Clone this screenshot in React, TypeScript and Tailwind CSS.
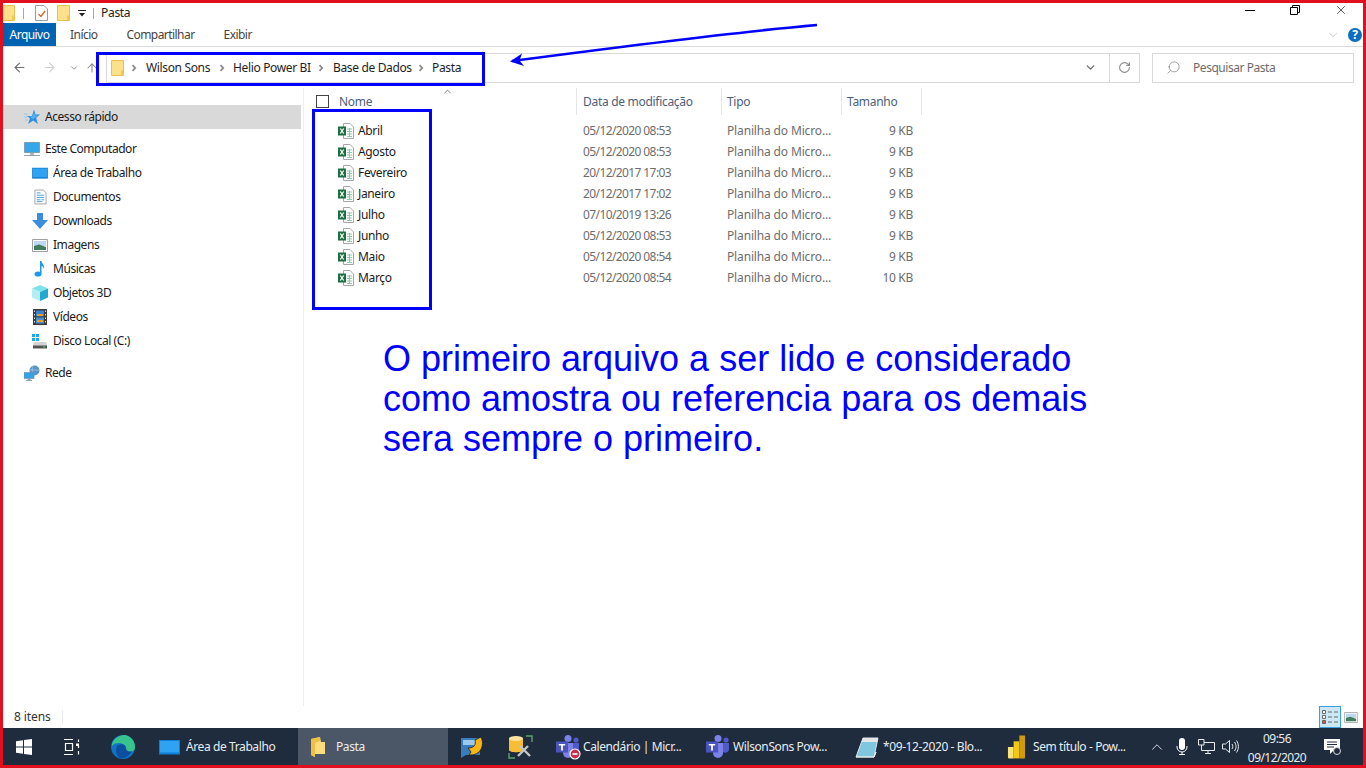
import { ReactNode } from "react";
import { ArrowLeft, ArrowRight, ArrowUp, ChevronDown, ChevronUp, RotateCw, Search, X } from "lucide-react";

const FONT = "font-['Noto_Sans',sans-serif]";

const files = [
  ["Abril", "05/12/2020 08:53", "9 KB"],
  ["Agosto", "05/12/2020 08:53", "9 KB"],
  ["Fevereiro", "20/12/2017 17:03", "9 KB"],
  ["Janeiro", "20/12/2017 17:02", "9 KB"],
  ["Julho", "07/10/2019 13:26", "9 KB"],
  ["Junho", "05/12/2020 08:53", "9 KB"],
  ["Maio", "05/12/2020 08:54", "9 KB"],
  ["Março", "05/12/2020 08:54", "10 KB"],
];

const Folder = ({ className = "w-[13px] h-[16px]" }: { className?: string }) => (
  <svg viewBox="0 0 13 16" className={className}>
    <path d="M0.5 0.5H12.5V15.5H0.5Z" fill="#fde08a" stroke="#e8c04f" />
    <path d="M10 10.5H12.5V15.5H10Z" fill="#f2c94c" />
  </svg>
);

const ExcelIcon = () => (
  <svg viewBox="0 0 16 16" className="w-4 h-4 shrink-0">
    <path d="M5.5 0.5H12L15.5 4V15.5H5.5Z" fill="#fff" stroke="#a6a6a6" />
    <path d="M9 6H14M9 8.5H14M9 11H14M9 13.5H14M11.5 5V14" stroke="#8fc7a6" strokeWidth="1" />
    <path d="M0 3.5H8V12.5H0Z" fill="#1d6f42" />
    <path d="M2.3 5.5L5.7 10.5M5.7 5.5L2.3 10.5" stroke="#fff" strokeWidth="1.3" />
  </svg>
);

const Crumb = () => (
  <svg viewBox="0 0 6 8" className="w-[6px] h-2 shrink-0 block">
    <path d="M1.5 1.2L4.2 4L1.5 6.8" fill="none" stroke="#8a8a8a" strokeWidth="1.8" />
  </svg>
);

const StarIcon = () => (
  <svg viewBox="0 0 16 16" className="w-4 h-4">
    <path d="M10 0.5L11.5 5.5H16L12.2 8.8L13.8 15L9.2 11.5L4 15L6 9.5L3 7H8Z" fill="#2f8fdf" />
    <path d="M10 3L11 6.5H14L9 10L5.5 7.5H8.5Z" fill="#53b4f2" />
    <path d="M0 5H4M0 8H3M1 11H4" stroke="#8fc8f0" strokeWidth="1" />
  </svg>
);
const PcIcon = () => (
  <svg viewBox="0 0 16 16" className="w-4 h-4">
    <path d="M0.5 1.5H15.5V11.5H0.5Z" fill="#35a7e8" stroke="#7d9db3" />
    <path d="M6 12H10V14H6Z" fill="#a9b8c4" />
    <path d="M0 14.5H16" stroke="#8fa3b3" />
  </svg>
);
const DesktopIcon = ({ className = "w-4 h-4" }: { className?: string }) => (
  <svg viewBox="0 0 21 16" className={className}>
    <path d="M0 1H21V15.5H0Z" fill="#0e7fd6" />
    <path d="M1 2H20V13.5H1Z" fill="#2fa3f3" />
  </svg>
);
const DocIcon = () => (
  <svg viewBox="0 0 14 16" className="w-[13px] h-4">
    <path d="M1 0.5H10L13 3.5V15.5H1Z" fill="#fff" stroke="#a0a0a0" />
    <path d="M3 3.5H7M3 6H11M3 8.5H11M3 11H7M8 11H11M3 13H9" stroke="#3b9ade" strokeWidth="1" />
  </svg>
);
const DownIcon = () => (
  <svg viewBox="0 0 16 16" className="w-4 h-4">
    <path d="M5 0H11V7H16L8 16L0 7H5Z" fill="#3b8edb" />
  </svg>
);
const PictureIcon = ({ className = "w-4 h-[13px]" }: { className?: string }) => (
  <svg viewBox="0 0 16 13" className={className}>
    <path d="M0.5 0.5H15.5V12.5H0.5Z" fill="#fff" stroke="#a0a0a0" />
    <path d="M2 2H14V7H2Z" fill="#bcd9ef" />
    <path d="M2 7L7 5.5L14 8V11H2Z" fill="#3f7d5c" />
  </svg>
);
const MusicIcon = () => (
  <svg viewBox="0 0 12 16" className="w-3 h-4">
    <ellipse cx="4" cy="13" rx="3.5" ry="2.6" fill="#1e9be8" />
    <path d="M6 13V0H7.5C8 3 11 4 10 8C9.5 6 8.5 5 7.5 5V13Z" fill="#1e9be8" />
  </svg>
);
const CubeIcon = () => (
  <svg viewBox="0 0 16 16" className="w-4 h-4">
    <path d="M8 0L16 3.5L8 7L0 3.5Z" fill="#7fe3ea" />
    <path d="M0 3.5L8 7V16L0 12.5Z" fill="#b5eef2" />
    <path d="M16 3.5L8 7V16L16 12.5Z" fill="#22a9cf" />
  </svg>
);
const FilmIcon = () => (
  <svg viewBox="0 0 14 16" className="w-[14px] h-4">
    <path d="M0 0H14V16H0Z" fill="#3b3b3b" />
    <path d="M1 1.5H2V3H1ZM1 5H2V6.5H1ZM1 8.5H2V10H1ZM1 12H2V13.5H1ZM12 1.5H13V3H12ZM12 5H13V6.5H12ZM12 8.5H13V10H12ZM12 12H13V13.5H12Z" fill="#d8d8d8" />
    <path d="M3 1.5H11V7.5H3Z" fill="#3f7fcf" />
    <path d="M3 8.5H11V14.5H3Z" fill="#4f8fd0" />
    <path d="M4 5H10V7H4ZM4 11H10V13H4Z" fill="#e0a030" />
  </svg>
);
const DiskIcon = () => (
  <svg viewBox="0 0 16 16" className="w-4 h-4">
    <path d="M0 1H3V4H0ZM4 1H7V4H4ZM0 5H3V8H0ZM4 5H7V8H4Z" fill="#1fa5ef" />
    <path d="M2 9H14L15 11V15H1V11Z" fill="#d4d4d4" />
    <path d="M1 12.5H15V15.5H1Z" fill="#555" />
    <path d="M11 13.5H13V14.5H11Z" fill="#3fdc6a" />
  </svg>
);
const NetIcon = () => (
  <svg viewBox="0 0 16 16" className="w-4 h-4">
    <circle cx="10.5" cy="5.5" r="5" fill="#5a93c8" />
    <path d="M9 1C8 3 8 5 9 7M5.5 5H15.5" stroke="#a9cbe6" strokeWidth="0.7" fill="none" />
    <path d="M0 7.5H10V13.5H0Z" fill="#34a3e6" stroke="#6f8da3" strokeWidth="0.6" />
    <path d="M3.5 14H6.5V15H8V16H2V15H3.5Z" fill="#8fa3b3" />
  </svg>
);

const NavRow = ({ icon, label, indent, selected }: { icon: ReactNode; label: string; indent?: boolean; selected?: boolean }) => (
  <div className={`h-6 flex items-center shrink-0 mr-[2px] ${selected ? "bg-[#d9d9d9]" : ""} ${indent ? "pl-[29px]" : "pl-[21px]"}`}>
    <span className="flex items-center justify-center shrink-0 w-[16px] mr-[5px]">{icon}</span>
    <span className="text-[12px] text-[#1a1a1a] whitespace-nowrap tracking-[-0.45px]">{label}</span>
  </div>
);

const TeamsIcon = ({ busy }: { busy?: boolean }) => (
  <svg viewBox="0 0 26 26" className="w-[26px] h-[26px] shrink-0">
    <circle cx="13" cy="4.5" r="3.5" fill="#7b83eb" />
    <circle cx="21" cy="6" r="2.6" fill="#5059c9" />
    <path d="M8 9H18V19A5 5 0 0 1 8 19Z" fill="#7b83eb" />
    <path d="M18 9H24V16A4 4 0 0 1 18 18Z" fill="#5059c9" />
    <path d="M1 7.5H13V18.5H1Z" fill="#4b53bc" />
    <path d="M3.8 10H10.2V11.6H7.9V16.5H6.1V11.6H3.8Z" fill="#fff" />
    {busy && <circle cx="20" cy="20" r="5" fill="#c4314b" stroke="#fff" strokeWidth="1.2" />}
    {busy && <path d="M17.5 20H22.5" stroke="#fff" strokeWidth="1.6" />}
  </svg>
);

const TaskItem = ({ width, icon, label, active }: { width: string; icon: ReactNode; label?: string; active?: boolean }) => (
  <div className={`h-full flex items-center shrink-0 ${width} ${active ? "bg-[#4b5766]" : ""}`}>
    {icon}
    {label && <span className="text-[12px] text-[#e8ecf0] whitespace-nowrap tracking-[-0.4px] pt-px">{label}</span>}
  </div>
);

export default function App() {
  return (
    <div className={`${FONT} relative w-screen h-screen overflow-hidden border-[3px] border-[#e2101f] bg-white flex flex-col`}>
      {/* Title bar */}
      <div className="h-5 shrink-0 flex items-center relative">
        <div className="w-3 h-4 overflow-hidden flex justify-end"><Folder className="w-[13px] h-4 shrink-0" /></div>
        <div className="ml-2 w-px h-[11px] bg-[#a8a8a8]" />
        <svg viewBox="0 0 13 16" className="ml-[11px] w-[13px] h-4">
          <path d="M0.5 0.5H9L12.5 4V15.5H0.5Z" fill="#fff" stroke="#9c9c9c" />
          <path d="M3.5 9L6 11.5L10 6" fill="none" stroke="#e2622a" strokeWidth="1.4" />
        </svg>
        <Folder className="ml-[9px] w-[13px] h-4" />
        <svg viewBox="0 0 8 8" className="ml-[8px] w-2 h-2">
          <path d="M0 1H8V2H0ZM1 4H7L4 7.5Z" fill="#222" />
        </svg>
        <div className="ml-[7px] w-px h-[11px] bg-[#a8a8a8]" />
        <span className="ml-[7px] text-[12px] text-[#222] tracking-[-0.3px] pb-px">Pasta</span>
        <div className="ml-auto flex items-center h-full pb-[6px]">
          <div className="w-[10px] h-px bg-black mr-[35px]" />
          <svg viewBox="0 0 10 10" className="w-[10px] h-[10px] mr-[34px]">
            <path d="M2.5 2.5V0.5H9.5V7.5H7.5M0.5 2.5H7.5V9.5H0.5Z" fill="none" stroke="#000" />
          </svg>
          <X size={14} strokeWidth={1.1} className="text-black mr-[15px]" />
        </div>
      </div>

      {/* Ribbon tabs */}
      <div className="h-6 shrink-0 flex border-b border-[#dadbdc] text-[12px] text-[#444] tracking-[-0.55px]">
        <div className="w-[53px] h-[23px] bg-[#0063b1] text-white flex items-center justify-center">Arquivo</div>
        <span className="ml-[14px] leading-[23px]">Início</span>
        <span className="ml-[29px] leading-[23px]">Compartilhar</span>
        <span className="ml-[29px] leading-[23px]">Exibir</span>
        <div className="ml-auto flex items-center pr-px">
          <ChevronDown size={14} strokeWidth={1.2} className="text-[#b5b5b5] mr-[8px]" />
          <span className="w-[14px] h-[14px] rounded-full bg-[#0a6fc4] text-white text-[12px] font-bold flex items-center justify-center tracking-normal">?</span>
        </div>
      </div>

      {/* Address row */}
      <div className="h-[41px] shrink-0 flex items-center">
        <ArrowLeft size={15} strokeWidth={1.7} className="ml-[9px] text-[#6e6e6e]" />
        <ArrowRight size={15} strokeWidth={1.7} className="ml-[15px] text-[#d0d0d0]" />
        <ChevronDown size={10} strokeWidth={2.4} className="ml-[12px] text-[#9a9a9a]" />
        <ArrowUp size={14} strokeWidth={1.8} className="ml-[6px] text-[#8a8a8a]" />
        <div className="ml-[7px] w-[1034px] h-[30px] border border-[#d9d9d9] flex items-center text-[12px] text-[#1e1e1e] tracking-[-0.35px]">
          <Folder className="ml-[4px] w-[13px] h-4 shrink-0" />
          <span className="ml-[7px]"><Crumb /></span>
          <span className="ml-[9px] w-[64px] whitespace-nowrap">Wilson Sons</span>
          <span className="ml-[9px]"><Crumb /></span>
          <span className="ml-[8px] w-[78px] whitespace-nowrap">Helio Power BI</span>
          <span className="ml-[7px]"><Crumb /></span>
          <span className="ml-[9px] w-[77px] whitespace-nowrap">Base de Dados</span>
          <span className="ml-[8px]"><Crumb /></span>
          <span className="ml-[8px] whitespace-nowrap">Pasta</span>
          <ChevronDown size={13} strokeWidth={2.4} className="ml-auto mr-[12px] text-[#6b6b6b]" />
          <div className="w-[30px] h-full border-l border-[#d9d9d9] flex items-center justify-center">
            <RotateCw size={13} strokeWidth={2} className="text-[#8a8a8a]" />
          </div>
        </div>
        <div className="ml-[12px] w-[202px] h-[30px] border border-[#d9d9d9] flex items-center text-[12px] text-[#6d6d6d] tracking-[-0.45px]">
          <Search size={15} strokeWidth={1} className="ml-[13px] mr-[12px] text-[#6d6d6d] -scale-x-100" />
          Pesquisar Pasta
        </div>
      </div>

      {/* Main area */}
      <div className="flex-1 min-h-0 flex">
        <div className="w-[301px] shrink-0 border-r border-[#eeeeee] flex flex-col pt-[17px]">
          <NavRow icon={<StarIcon />} label="Acesso rápido" selected />
          <div className="h-2 shrink-0" />
          <NavRow icon={<PcIcon />} label="Este Computador" />
          <NavRow indent icon={<DesktopIcon className="w-4 h-3" />} label="Área de Trabalho" />
          <NavRow indent icon={<DocIcon />} label="Documentos" />
          <NavRow indent icon={<DownIcon />} label="Downloads" />
          <NavRow indent icon={<PictureIcon />} label="Imagens" />
          <NavRow indent icon={<MusicIcon />} label="Músicas" />
          <NavRow indent icon={<CubeIcon />} label="Objetos 3D" />
          <NavRow indent icon={<FilmIcon />} label="Vídeos" />
          <NavRow indent icon={<DiskIcon />} label="Disco Local (C:)" />
          <div className="h-2 shrink-0" />
          <NavRow icon={<NetIcon />} label="Rede" />
        </div>

        <div className="flex-1 min-w-0 flex flex-col">
          {/* Column headers */}
          <div className="h-[27px] shrink-0 flex items-center relative text-[12px] text-[#4c607a] tracking-[-0.3px]">
            <div className="w-[272px] flex items-center pl-3">
              <span className="w-[13px] h-[13px] border border-[#444] bg-white shrink-0" />
              <span className="ml-[10px]">Nome</span>
            </div>
            <div className="w-[145px] h-full border-l border-[#e5e5e5] pl-[6px] flex items-center whitespace-nowrap">Data de modificação</div>
            <div className="w-[120px] h-full border-l border-[#e5e5e5] pl-[5px] flex items-center">Tipo</div>
            <div className="w-[81px] h-full border-x border-[#e5e5e5] pl-[5px] flex items-center">Tamanho</div>
            <ChevronUp size={11} strokeWidth={1.6} className="absolute left-[138px] top-[-2px] text-[#555]" />
          </div>
          {/* File list */}
          <div className="pt-[5px] flex flex-col">
            {files.map(([name, date, size]) => (
              <div key={name} className="h-[21px] flex items-center text-[12px]">
                <div className="w-[273px] pl-[34px] flex items-center text-[#1a1a1a] tracking-[-0.35px]">
                  <ExcelIcon />
                  <span className="ml-1">{name}</span>
                </div>
                <div className="w-[144px] pl-[6px] text-[#6d6d6d] whitespace-nowrap tracking-[-0.6px]">{date}</div>
                <div className="w-[120px] pl-[6px] text-[#6d6d6d] whitespace-nowrap tracking-[-0.15px]">Planilha do Micro...</div>
                <div className="w-[72px] text-right text-[#6d6d6d] tracking-[-0.3px]">{size}</div>
              </div>
            ))}
          </div>
        </div>
      </div>

      {/* Status bar */}
      <div className="h-[22px] shrink-0 flex items-center text-[12px] text-[#333]">
        <span className="ml-[11px] tracking-[-0.1px]">8 itens</span>
        <div className="ml-[11px] w-px h-[15px] bg-[#ececec]" />
        <div className="ml-auto flex items-center h-full pr-[5px]">
          <div className="w-[22px] h-full bg-[#cce8f5] border border-[#3a9fdc] flex items-center justify-center">
            <svg viewBox="0 0 16 14" className="w-4 h-[14px]">
              <path d="M0.5 0.5H3.5V3.5H0.5ZM0.5 5.5H3.5V8.5H0.5Z" fill="#fff" stroke="#666" />
              <path d="M0.5 10.5H3.5V13.5H0.5Z" fill="#e05050" stroke="#666" />
              <path d="M6 2H10M12 2H16M6 7H10M12 7H16M6 12H10M12 12H16" stroke="#666" />
            </svg>
          </div>
          <PictureIcon className="ml-[3px] w-[14px] h-[11px]" />
        </div>
      </div>

      {/* Taskbar */}
      <div className="h-[37px] shrink-0 bg-[#1e2c3e] flex items-center">
        <TaskItem width="w-[50px]" icon={
          <svg viewBox="0 0 16 16" className="ml-[13px] w-4 h-4"><path d="M0 2.2L7 1.2V7.6H0ZM8 1L16 0V7.6H8ZM0 8.4H7V14.8L0 13.8ZM8 8.4H16V16L8 15Z" fill="#fff" /></svg>
        } />
        <TaskItem width="w-[48px]" icon={
          <svg viewBox="0 0 17 16" className="ml-[10px] w-[17px] h-4"><path d="M1 .5H10M1 15.5H10M2.5 4.5H9.5V11.5H2.5ZM15.5 .5V3M15.5 7V9M15.5 12V15.5" fill="none" stroke="#fff" strokeWidth="1.2" /><path d="M13 4.5H16V7H13Z" fill="#fff" /></svg>
        } />
        <TaskItem width="w-[48px]" icon={
          <svg viewBox="0 0 24 24" className="ml-[10px] w-6 h-6">
            <circle cx="12" cy="12" r="12" fill="#1173c5" />
            <path d="M1 9C3 2 10 0 14 0C20 1 24 6 24 12C24 15 22 17 18 17C14 17 13 15 13.5 13C14.5 11 12 8 8 8C5 8 2 9 1 11Z" fill="#36c38d" />
            <path d="M6 11C10 8 15 9 15 13C15 16 18 17 21 16C18 22 12 24 9 23C5 21 4 15 6 11Z" fill="#0b4f9e" />
          </svg>
        } />
        <TaskItem width="w-[149px]" label="Área de Trabalho" icon={<DesktopIcon className="ml-[10px] mr-[6px] w-[21px] h-4 shrink-0" />} />
        <TaskItem width="w-[150px]" active label="Pasta" icon={
          <svg viewBox="0 0 14 20" className="ml-[13px] mr-[11px] w-[14px] h-5"><path d="M0 2L9 0L10 5L14 5V17H4V20L0 18Z" fill="#fbdc7e" /><path d="M0 2V18L4 20V6L9 4V0Z" fill="#f0c040" /></svg>
        } />
        <TaskItem width="w-[48px]" icon={
          <svg viewBox="0 0 24 24" className="ml-3 w-6 h-6 shrink-0">
            <path d="M1 3H20V20H6L1 23Z" fill="#3a7cc0" />
            <path d="M3 5H17V10H3Z" fill="#9cc9ea" />
            <path d="M8 13C15 13 16 9 15 5L21 2C25 10 21 21 9 20L11 17Z" fill="#f7b614" stroke="#1a1a1a" strokeWidth="0.8" />
          </svg>
        } />
        <TaskItem width="w-[47px]" icon={
          <svg viewBox="0 0 25 24" className="ml-3 w-[25px] h-6 shrink-0">
            <path d="M1 4C1 1 15 1 15 4V15C15 18 1 18 1 15Z" fill="#f6bd35" />
            <ellipse cx="8" cy="3.5" rx="7" ry="2.5" fill="#fbe39d" />
            <path d="M18 1H24V7M1 18V23H7" fill="none" stroke="#5aa469" strokeWidth="1.4" />
            <path d="M10 21L20 11M12 11L22 21" stroke="#c4c4c4" strokeWidth="2.4" />
          </svg>
        } />
        <TaskItem width="w-[150px]" label="Calendário | Micr..." icon={<span className="ml-3 mr-[2px] flex"><TeamsIcon busy /></span>} />
        <TaskItem width="w-[150px]" label="WilsonSons Pow..." icon={<span className="ml-3 mr-[2px] flex"><TeamsIcon /></span>} />
        <TaskItem width="w-[150px]" label="*09-12-2020 - Blo..." icon={
          <svg viewBox="0 0 25 22" className="ml-3 mr-[3px] w-[25px] h-[22px] shrink-0">
            <path d="M8 2H23L19 21H1Z" fill="#7fc6de" stroke="#d8e8ee" />
            <path d="M8 2H23L22 6H7Z" fill="#e5e5e5" />
            <path d="M1 21H19L21 16L19 21" stroke="#eee" />
          </svg>
        } />
        <TaskItem width="w-[146px]" label="Sem título - Pow..." icon={
          <svg viewBox="0 0 20 24" className="ml-[14px] mr-[7px] w-[19px] h-6 shrink-0">
            <path d="M1 12H7V24H2C1 24 1 23 1 22Z" fill="#fbe27a" />
            <path d="M7 6H13V24H7Z" fill="#f2c811" />
            <path d="M13 0H19V23C19 24 18 24 18 24H13Z" fill="#d09a0c" />
          </svg>
        } />
        <div className="flex items-center text-white ml-[9px]">
          <ChevronUp size={18} strokeWidth={1.2} className="text-[#e8ecf0]" />
          <svg viewBox="0 0 12 17" className="ml-[10px] w-3 h-[17px]"><path d="M3 3A3 3 0 0 1 9 3V9A3 3 0 0 1 3 9Z" fill="#fff" /><path d="M1 8V9A5 5 0 0 0 11 9V8M6 14V16M3 16.5H9" fill="none" stroke="#fff" /></svg>
          <svg viewBox="0 0 17 15" className="ml-[10px] w-[17px] h-[15px]"><path d="M3.5 3.5H16.5V11.5H3.5ZM7 14.5H13M10 11.5V14.5" fill="none" stroke="#e8ecf0" /><path d="M.5 .5H6V6H.5Z" fill="#1e2c3e" stroke="#e8ecf0" /></svg>
          <svg viewBox="0 0 17 15" className="ml-[7px] w-[17px] h-[15px]"><path d="M.5 5H3.5L7.5 1.5V13.5L3.5 10H.5ZM10 5C11 6.5 11 8.5 10 10M12.5 3C14.5 6 14.5 9 12.5 12M14.5 1.5C17 5 17 10 14.5 13.5" fill="none" stroke="#e8ecf0" /></svg>
        </div>
        <div className="w-[76px] flex flex-col items-center pt-[3px] text-[12px] leading-[19px] text-[#e8ecf0] tracking-[-0.55px]">
          <span>09:56</span>
          <span>09/12/2020</span>
        </div>
        <svg viewBox="0 0 17 16" className="ml-[9px] w-[17px] h-4">
          <path d="M0 0H16V11H10L6 15V11H0Z" fill="#fff" />
          <path d="M3 3H13M3 5.5H13M3 8H10" stroke="#1e2c3e" />
          <circle cx="13" cy="12" r="3.5" fill="#1e2c3e" stroke="#ddd" />
        </svg>
      </div>

      {/* Blue annotations drawn over the screenshot */}
      <div className="absolute left-[93px] top-[49px] w-[389px] h-[34px] border-[3px] border-[#0000ff]" />
      <div className="absolute left-[309px] top-[106px] w-[120px] h-[201px] border-[3px] border-[#0000ff]" />
      <svg viewBox="0 0 320 50" className="absolute left-[503px] top-[17px] w-[320px] h-[50px]">
        <path d="M311 5C220 13 120 26 6 41" stroke="#0000ff" strokeWidth="2.6" fill="none" />
        <path d="M4 41.5L16 33.5L13.5 40.5L18 46Z" fill="#0000ff" />
      </svg>
      <div className="absolute left-[380px] top-[336px] font-['Liberation_Sans',sans-serif] text-[36px] leading-10 text-[#0000ff] whitespace-nowrap">
        <div>O primeiro arquivo a ser lido e considerado</div>
        <div>como amostra ou referencia para os demais</div>
        <div>sera sempre o primeiro.</div>
      </div>
    </div>
  );
}
